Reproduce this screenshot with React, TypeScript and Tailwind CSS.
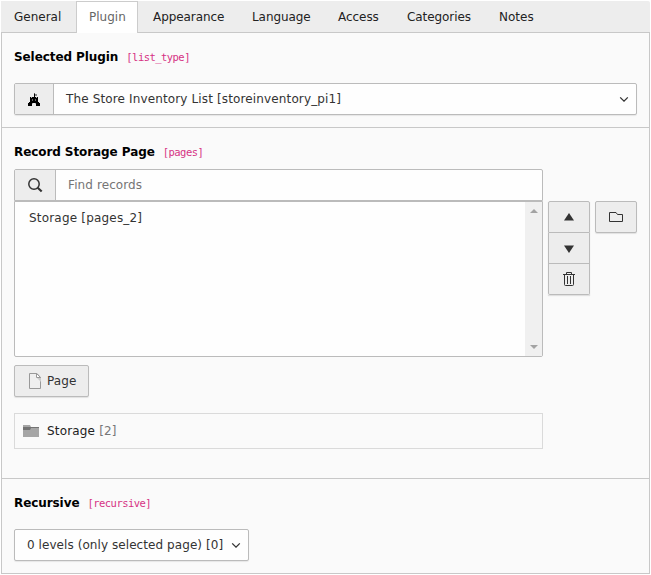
import type { ReactNode } from "react";

const tabs = [
  { label: "General", box: "w-[75px] pl-[13px]" },
  { label: "Plugin", box: "w-[62px] pl-[12px]" },
  { label: "Appearance", box: "w-[99px] pl-[15px] tracking-[-0.08px]" },
  { label: "Language", box: "w-[86px] pl-[15px] tracking-[-0.08px]" },
  { label: "Access", box: "w-[69px] pl-[15px] tracking-[-0.05px]" },
  { label: "Categories", box: "w-[92px] pl-[15px] tracking-[-0.08px]" },
  { label: "Notes", box: "w-[64px] pl-[15px]" },
];

function Heading({ title, name }: { title: string; name: string }) {
  return (
    <h2 className="flex h-4 items-baseline whitespace-nowrap leading-4">
      <span className="text-[12px] font-bold tracking-[-0.08px] text-black">{title}</span>
      <code className="ml-[8px] font-['DejaVu_Sans_Mono',monospace] text-[10.5px] tracking-[-0.54px] text-[#d63384]">[{name}]</code>
    </h2>
  );
}

function Chevron() {
  return (
    <svg width="10" height="7" viewBox="0 0 10 7" fill="none" stroke="#333" strokeWidth="1.3">
      <path d="M1.2 1.4 5 5.1 8.8 1.4" />
    </svg>
  );
}

function Side({ children, className }: { children: ReactNode; className: string }) {
  return (
    <button className={"flex w-[42px] items-center justify-center border-[#bbb] bg-[#ededed] " + className}>
      {children}
    </button>
  );
}

export default function App() {
  return (
    <div className="h-[575px] w-[651px] bg-white pl-px pt-px font-['DejaVu_Sans',sans-serif] text-[12px] text-[#333]">
      <nav className="flex h-[31px] w-[649px] rounded-tr-[2px] bg-[#ededed]">
        {tabs.map((t, i) => (
          <div
            key={t.label}
            className={
              "shrink-0 whitespace-nowrap " +
              t.box +
              (i === 1
                ? " relative h-8 border-x border-t border-[#ccc] bg-white leading-[30px] text-[#666]"
                : " leading-[32px] text-[#222]")
            }
          >
            {t.label}
          </div>
        ))}
      </nav>
      <main className="h-[542px] w-[649px] border border-[#c8c8c8] bg-[#fafafa]">
        <section className="h-[95px] border-b border-[#c8c8c8] pl-3 pt-4">
          <Heading title="Selected Plugin" name="list_type" />
          <div className="mt-[18px] flex h-8 w-[623px] overflow-hidden rounded-[2px] border border-[#bbb] bg-[#fefefe] shadow-[0_1px_1px_rgba(0,0,0,0.08)]">
            <div className="flex w-[39px] items-center justify-center border-r border-[#bbb] bg-[#ededed]">
              <svg width="12" height="13" viewBox="0 0 12 13" fill="#000">
                <path d="M6 0h1v1H6z" fill="#555" />
                <path d="M7 1h2v2H7z" fill="#888" />
                <path d="M6 1h1v3h1v.7h1V4h1v5h1v1h1v3H8v-2.5L7 10H5l-1 .5V13H0v-3h1V9h1V4h1v.7h1V4h2z" />
                <path d="M4 6h1v2H4zM7 6h1v2H7z" fill="#666" />
              </svg>
            </div>
            <span className="flex-1 pl-3 leading-[30px] tracking-[0.136px]">The Store Inventory List [storeinventory_pi1]</span>
            <span className="mr-[7px] flex items-center"><Chevron /></span>
          </div>
        </section>
        <section className="h-[351px] border-b border-[#c8c8c8] pl-3 pt-4">
          <Heading title="Record Storage Page" name="pages" />
          <div className="mt-[9px] flex h-8 w-[529px] overflow-hidden rounded-t-[2px] border border-[#bbb] bg-[#fefefe]">
            <div className="flex w-[41px] items-center justify-center border-r border-[#bbb] bg-[#ededed]">
              <svg width="16" height="16" viewBox="0 0 16 16" fill="none" stroke="#333">
                <circle cx="7" cy="7" r="5.2" strokeWidth="1.5" />
                <path d="m10.7 10.7 4 3.8" strokeWidth="2.1" />
              </svg>
            </div>
            <span className="pl-3 leading-[30px] tracking-[0.1px] text-[#757575]">Find records</span>
          </div>
          <div className="flex items-start">
            <div className="flex h-[156px] w-[529px] justify-between rounded-b-[2px] border border-[#bbb] bg-[#fefefe]">
              <span className="pl-3.5 leading-[32px] tracking-[0.19px]">Storage [pages_2]</span>
              <div className="flex w-[17px] flex-col items-center justify-between bg-[#f0f0f0] py-[7px]">
                <svg width="8" height="4" viewBox="0 0 8 4" fill="#a3a3a3"><path d="M0 4 4 0l4 4z" /></svg>
                <svg width="8" height="4" viewBox="0 0 8 4" fill="#a3a3a3"><path d="m0 0 4 4 4-4z" /></svg>
              </div>
            </div>
            <div className="ml-[5px] shadow-[0_1px_1px_rgba(0,0,0,0.1)]">
              <Side className="h-8 rounded-t-[2px] border">
                <svg width="10" height="8" viewBox="0 0 10 8" fill="#333"><path d="m0 7.5 5-7.5 5 7.5z" /></svg>
              </Side>
              <Side className="h-[31px] border-x border-b pt-px">
                <svg width="10" height="8" viewBox="0 0 10 8" fill="#333"><path d="m0 .5 5 7.5 5-7.5z" /></svg>
              </Side>
              <Side className="h-[31px] rounded-b-[2px] border-x border-b">
                <svg width="12" height="14" viewBox="0 0 12 14" fill="none" stroke="#333">
                  <path d="M0 2.5h12M3.5 2V.5h5V2M1.5 3v9.5a1 1 0 0 0 1 1h7a1 1 0 0 0 1-1V3M4.5 4v8M7.5 4v8" />
                </svg>
              </Side>
            </div>
            <Side className="ml-[5px] h-8 rounded-[2px] border shadow-[0_1px_1px_rgba(0,0,0,0.1)]">
              <svg width="14" height="10" viewBox="0 0 14 10" fill="none" stroke="#333">
                <path d="M.5.5h6.5l1.5 2h5v7H.5z" />
              </svg>
            </Side>
          </div>
          <button className="mt-2 flex h-8 w-[75px] items-center rounded-[2px] border border-[#bbb] bg-[#ededed] pl-3.5 shadow-[0_1px_1px_rgba(0,0,0,0.1)]">
            <svg width="12" height="16" viewBox="0 0 12 16" fill="none">
              <path d="M.5.5h7.5l3.5 4v11H.5z" fill="#efefef" stroke="#999" />
              <path d="M8 5h4v4z" fill="#ccc" />
              <path d="M7.5.5v4h4z" fill="#fff" stroke="#999" />
            </svg>
            <span className="ml-[6px] leading-[30px] tracking-[0.1px]">Page</span>
          </button>
          <div className="mt-4 flex h-9 w-[529px] items-center border border-[#dadada] pl-2">
            <svg width="16" height="12" viewBox="0 0 16 12">
              <path d="M0 0h7l1 2h8v10H0z" fill="#a6a6a6" />
              <path d="M0 2h16v1H8L7 5H0z" fill="#737373" />
            </svg>
            <span className="ml-2 leading-[34px] tracking-[0.17px] text-[#222]">Storage <span className="text-[#777]">[2]</span></span>
          </div>
        </section>
        <section className="pl-3 pt-4">
          <Heading title="Recursive" name="recursive" />
          <div className="mt-[18px] flex h-8 w-[235px] items-center justify-between whitespace-nowrap rounded-[2px] border border-[#bbb] bg-[#fefefe] pl-3 pr-[7px] shadow-[0_1px_1px_rgba(0,0,0,0.08)]">
            <span className="leading-[30px] tracking-[0.07px]">0 levels (only selected page) [0]</span>
            <Chevron />
          </div>
        </section>
      </main>
    </div>
  );
}
